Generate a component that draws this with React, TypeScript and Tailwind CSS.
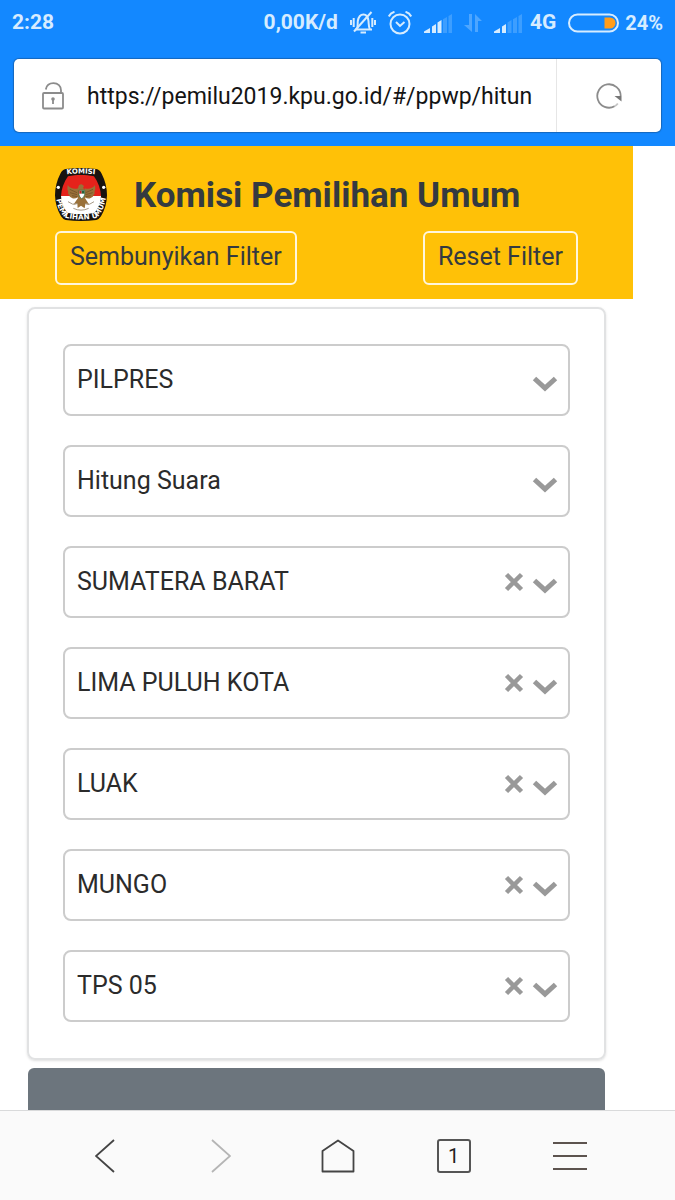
import { useState } from 'react';

type Filter = {
  id: string;
  label: string;
  value: string;
  clearable: boolean;
};

const initialFilters: Filter[] = [
  { id: 'jenis', label: 'Jenis pemilihan', value: 'PILPRES', clearable: false },
  { id: 'tahap', label: 'Tahapan', value: 'Hitung Suara', clearable: false },
  { id: 'provinsi', label: 'Provinsi', value: 'SUMATERA BARAT', clearable: true },
  { id: 'kabupaten', label: 'Kabupaten', value: 'LIMA PULUH KOTA', clearable: true },
  { id: 'kecamatan', label: 'Kecamatan', value: 'LUAK', clearable: true },
  { id: 'kelurahan', label: 'Kelurahan', value: 'MUNGO', clearable: true },
  { id: 'tps', label: 'TPS', value: 'TPS 05', clearable: true },
];

const signalBars = [
  'M0 19v-1.500L6 14v5z',
  'M8 12.500L12 10v9H8z',
  'M13.500 8.500L17.500 6v13h-4z',
  'M19 5.200L23 3v16h-4z',
  'M24.500 2L28 0v19h-3.500z',
];

const SignalIcon = ({ level }: { level: number }) => (
  <svg className="h-[19px] w-7" viewBox="0 0 28 19" fill="#d6ecff">
    {signalBars.map((d, i) => (
      <path key={d} d={d} opacity={i < level ? 1 : 0.22} />
    ))}
  </svg>
);

const StatusBar = () => (
  <div className="flex h-[46px] items-center justify-between px-3 text-[21px] font-bold text-[#d6ecff]">
    <span>2:28</span>
    <div className="flex items-center gap-3">
      <span>0,00K/d</span>
      {/* silent mode */}
      <svg className="h-6 w-[26px]" viewBox="0 0 26 24" fill="none" stroke="#d6ecff" strokeWidth="2">
        <path d="M5 18.500h17M7 18c1-2 .5-5 .8-8C8.500 6 10.500 3.500 13.500 3.500S18 6 18.500 10c.3 3 0 6 1.500 8.500M10.500 21.500h5.500" />
        <path d="M21.500 1L4 20.500" />
        <path d="M1 9v5M3.700 7v9M22.300 7v9M25 9v5" />
      </svg>
      {/* alarm */}
      <svg className="h-6 w-6" viewBox="0 0 24 24" fill="none" stroke="#d6ecff" strokeWidth="2">
        <circle cx="12" cy="13" r="9.500" />
        <path d="M8 11l4 4 4.500-4M.8 5.500C2 3 4 1.500 6.500.8M23.200 5.500C22 3 20 1.500 17.500.8" />
      </svg>
      <SignalIcon level={3} />
      {/* data transfer */}
      <svg className="h-5 w-[18px]" viewBox="0 0 18 20" fill="#d6ecff" opacity="0.3">
        <path d="M5 1h3v18L0 12h5zM11 19V1l7 7h-4v11z" />
      </svg>
      <div className="flex items-center gap-2">
        <SignalIcon level={2} />
        <span>4G</span>
      </div>
      <div className="flex items-center gap-1.5">
        <svg className="h-5 w-[51px]" viewBox="0 0 51 20">
          <rect x="1" y="1.500" width="49" height="17" rx="8.500" fill="none" stroke="#d6ecff" strokeWidth="2" />
          <path d="M36.500 4.500h5.500a5.500 5.500 0 010 11h-5.500z" fill="#ff9d1c" />
        </svg>
        <span className="text-[20px]">24%</span>
      </div>
    </div>
  </div>
);

const AddressBar = () => (
  <div className="mx-[14px] mt-[13px] mb-[14px] flex h-[73px] items-center rounded-[5px] bg-white shadow-[0_0_1px_1px_#1668bd]">
    <svg className="ml-7 h-7 w-[22px] shrink-0" viewBox="0 0 22 28" fill="none" stroke="#8c8c8c" strokeWidth="1.800">
      <rect x="1" y="11" width="20" height="15.500" rx="1" />
      <path d="M3.800 7.500C4.500 3.500 7.500 1.200 11.500 1.200c4.500 0 7.500 3 7.500 7V11" />
      <circle cx="11" cy="17" r="1.800" fill="#8c8c8c" stroke="none" />
      <path d="M11 17v5" />
    </svg>
    <input
      type="text"
      aria-label="Alamat"
      defaultValue="https://pemilu2019.kpu.go.id/#/ppwp/hitun"
      className="mr-[18px] ml-[23px] min-w-0 flex-1 pt-1 text-[23px] text-[#141414] outline-none"
    />
    <button type="button" aria-label="Muat ulang" className="flex h-full w-[105px] items-center justify-center border-l border-[#e6e6e6]">
      <svg className="size-[26px]" viewBox="0 0 26 26" fill="none" stroke="#8c8c8c" strokeWidth="1.800">
        <path d="M24.700 13A11.700 11.700 0 1 0 18.500 23.300" />
        <path d="M18.500 23.300q2-1 3.300-2.800" opacity="0.5" />
        <path d="M18.500 13h7v5.500z" fill="#777" stroke="none" />
      </svg>
    </button>
  </div>
);

const KpuLogo = () => (
  <svg className="h-[53px] w-[52px] shrink-0" viewBox="0 0 156 159">
    <defs>
      <clipPath id="shield">
        <path d="M39 25Q78 15 117 25Q136 52 138 84Q137 112 119 134Q78 144 37 134Q19 112 18 84Q20 52 39 25z" />
      </clipPath>
      <path id="topArc" d="M26 20Q78 13 130 20" />
      <path id="bottomArc" d="M3 90Q9 129 30 149Q78 160 126 149Q147 127 153 87" />
    </defs>
    <path d="M32 3Q78-3 124 3Q134 5 140 17Q156 48 156 82Q155 117 138 145Q132 154 124 156Q78 162 32 156Q24 154 18 145Q1 117 0 82Q0 48 16 17Q22 5 32 3z" fill="#17130f" />
    <g clipPath="url(#shield)">
      <rect width="156" height="84" fill="#e5221b" />
      <rect y="84" width="156" height="75" fill="#fff" />
    </g>
    <circle cx="10" cy="58" r="5" fill="#fff" />
    <circle cx="146" cy="58" r="5" fill="#fff" />
    {/* garuda */}
    <g fill="#9a7139">
      <path d="M70 61C57 65 45 61 38 51Q35 64 40 73Q36 75 43 82Q42 87 51 90Q58 94 69 88z" />
      <path d="M89 61C102 65 113 61 120 51Q123 64 118 73Q122 75 115 82Q116 87 107 90Q100 94 89 88z" />
      <path d="M70 58Q70 49 80 49L87 54L84 60L92 67L90 91Q80 100 69 91L67 67z" />
      <path d="M69 90L55 110L67 107L68 120L78 113L89 121L91 108L103 111L90 90z" />
    </g>
    <g stroke="#6a4a22" strokeWidth="2" fill="none">
      <path d="M44 64l22 10M45 74l21 6M51 83l16 3M114 64L92 74M113 74l-21 6M107 83l-15 3" />
    </g>
    <path d="M72 67h17v13q-1 8-9 12q-7-4-8-12z" fill="#fff" stroke="#26623a" strokeWidth="2" />
    <path d="M73 68h7v9h-7z" fill="#cf201b" />
    <path d="M80 68h8v9h-8z" fill="#26623a" />
    <path d="M39 101Q53 113 67 107M117 101Q104 113 91 107M55 121Q78 132 101 121" fill="none" stroke="#a89b88" strokeWidth="3" />
    <g fill="#fff" fontFamily="'DejaVu Sans', sans-serif" fontWeight="bold">
      <text fontSize="21" textAnchor="middle">
        <textPath href="#topArc" startOffset="50%">KOMISI</textPath>
      </text>
      <text fontSize="22" textAnchor="middle">
        <textPath href="#bottomArc" startOffset="50%">PEMILIHAN UMUM</textPath>
      </text>
    </g>
  </svg>
);

const FilterSelect = ({ filter, onClear }: { filter: Filter; onClear: () => void }) => (
  <div className="grid h-[72px] rounded-lg border-2 border-[#cccccc] bg-white">
    <select
      aria-label={filter.label}
      defaultValue={filter.value}
      key={filter.value}
      className="col-start-1 row-start-1 w-full appearance-none rounded-lg bg-transparent pr-24 pl-3 text-[25px] text-[#2b2b2b] outline-none"
    >
      <option>{filter.value}</option>
    </select>
    <div className="pointer-events-none col-start-1 row-start-1 flex items-center gap-2 justify-self-end pr-[10px]">
      {filter.clearable && filter.value && (
        <button type="button" aria-label={`Hapus ${filter.label}`} onClick={onClear} className="pointer-events-auto">
          <svg className="size-5" viewBox="0 0 20 20" stroke="#999" strokeWidth="4.500">
            <path d="M2.500 2.500l15 15M17.500 2.500l-15 15" />
          </svg>
        </button>
      )}
      <svg className="mt-2 h-4 w-[26px]" viewBox="0 0 26 16" fill="none" stroke="#999" strokeWidth="5">
        <path d="M2.500 2.500L13 12.200L23.500 2.500" />
      </svg>
    </div>
  </div>
);

const BottomNav = () => {
  const button = 'flex h-full flex-1 items-center justify-center';
  return (
    <nav className="flex h-[90px] shrink-0 border-t border-[#d9dadb] bg-[#fafafa] px-[47px]">
      <button type="button" aria-label="Kembali" className={button}>
        <svg className="h-[34px] w-5" viewBox="0 0 20 34" fill="none" stroke="#444" strokeWidth="1.800">
          <path d="M19 1L1 17l18 16" />
        </svg>
      </button>
      <button type="button" aria-label="Maju" className={button}>
        <svg className="h-[34px] w-5" viewBox="0 0 20 34" fill="none" stroke="#b5b5b5" strokeWidth="1.800">
          <path d="M1 1l18 16L1 33" />
        </svg>
      </button>
      <button type="button" aria-label="Beranda" className={button}>
        <svg className="h-[34px] w-[34px]" viewBox="0 0 34 34" fill="none" stroke="#444" strokeWidth="1.800" strokeLinejoin="round">
          <path d="M1.500 12L17 1.500L32.500 12v20.500h-31z" />
        </svg>
      </button>
      <button type="button" aria-label="Tab" className={button}>
        <span className="flex size-[34px] items-center justify-center rounded-[3px] border-2 border-[#555] text-[20px] leading-none text-[#222]">
          1
        </span>
      </button>
      <button type="button" aria-label="Menu" className={button}>
        <svg className="h-[30px] w-[34px]" viewBox="0 0 34 30" stroke="#5c534e" strokeWidth="2">
          <path d="M0 2h34M0 15h34M0 28h34" />
        </svg>
      </button>
    </nav>
  );
};

export default function App() {
  const [filters, setFilters] = useState(initialFilters);
  const [showFilters, setShowFilters] = useState(true);

  const clearFilter = (id: string) => {
    setFilters(prev => prev.map(f => (f.id === id ? { ...f, value: '' } : f)));
  };

  return (
    <div className="flex min-h-screen flex-col bg-white font-[Roboto,'Liberation_Sans',sans-serif]">
      <header className="flex flex-col bg-[#1388ff]">
        <StatusBar />
        <AddressBar />
      </header>

      <main className="flex flex-1 flex-col pr-[42px]">
        <div className="bg-[#ffc107] px-[55px] pt-[22px] pb-[14px] text-[#343a40]">
          <div className="flex items-center gap-[27px]">
            <KpuLogo />
            <h1 className="pt-0.5 text-[35px] leading-none font-bold">Komisi Pemilihan Umum</h1>
          </div>
          <div className="mt-[10px] flex justify-between">
            <button
              type="button"
              onClick={() => setShowFilters(!showFilters)}
              className="h-[54px] rounded-md border-2 border-[#fff6dc] px-[13px] pb-0.5 text-[25px]"
            >
              Sembunyikan Filter
            </button>
            <button
              type="button"
              onClick={() => setFilters(initialFilters)}
              className="h-[54px] rounded-md border-2 border-[#fff6dc] px-[13px] pb-0.5 text-[25px]"
            >
              Reset Filter
            </button>
          </div>
        </div>

        <div className="flex flex-1 flex-col gap-2 px-[27px] pt-2">
          {showFilters && (
            <div className="flex flex-col gap-[29px] rounded-lg border-2 border-[#e1e2e3] px-[34px] pt-[35px] pb-[36px] shadow-sm">
              {filters.map(filter => (
                <FilterSelect key={filter.id} filter={filter} onClear={() => clearFilter(filter.id)} />
              ))}
            </div>
          )}
          <div className="mx-px min-h-10 flex-1 rounded-t-md bg-[#6c757d]" />
        </div>
      </main>

      <BottomNav />
    </div>
  );
}
